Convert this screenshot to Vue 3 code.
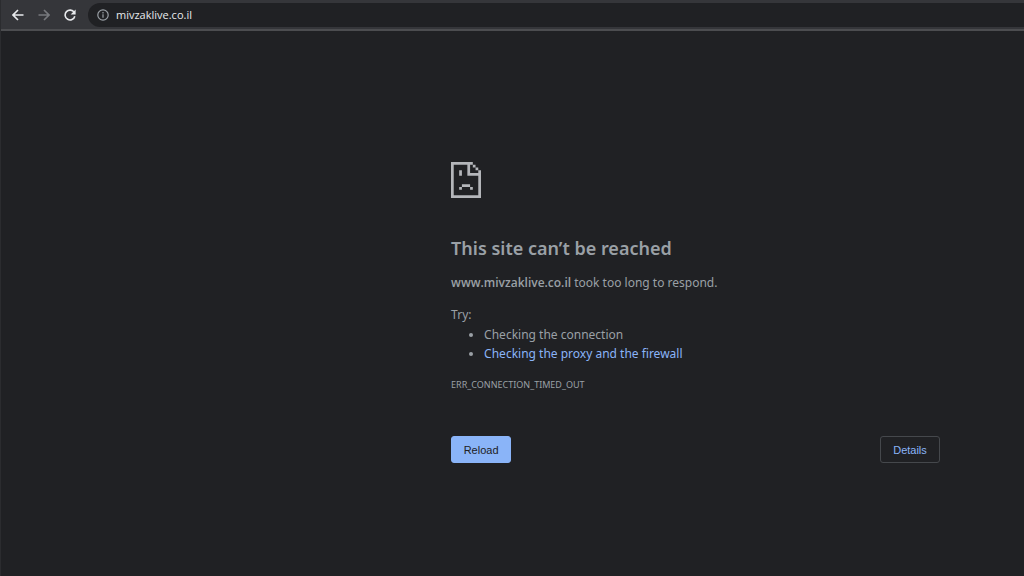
<script setup>
const host = 'mivzaklive.co.il'
const reload = () => window.location.reload()
</script>

<template>
  <div class="browser">
    <header class="toolbar">
      <button class="nav" type="button" aria-label="Back">
        <svg viewBox="0 0 12 12" width="12" height="12"><path d="M11.5 6H1.2M6 1L1 6l5 5" /></svg>
      </button>
      <button class="nav off" type="button" aria-label="Forward">
        <svg viewBox="0 0 12 12" width="12" height="12"><path d="M.5 6h10.3M6 1l5 5-5 5" /></svg>
      </button>
      <button class="nav" type="button" aria-label="Reload page" @click="reload">
        <svg viewBox="0 0 12 12" width="12" height="12">
          <path d="M10.2 3.4A4.9 4.9 0 1 0 10.8 7.2" />
          <path class="solid" d="M11.6 .4v5H6.6z" />
        </svg>
      </button>
      <div class="omnibox">
        <svg class="info" viewBox="0 0 12 12" width="12" height="12">
          <circle cx="6" cy="6" r="5.2" /><path d="M6 5.3v3.5M6 3v1.4" />
        </svg>
        <input class="url" type="text" aria-label="Address" :value="host" />
      </div>
    </header>

    <main class="error">
      <svg class="sad" viewBox="0 0 11 13" width="30" height="36" preserveAspectRatio="none" aria-hidden="true">
        <path d="M0 0H8V1H9V2H10V3H11V13H0ZM1 1V12H10V5H6V1ZM7 1V4H10V3H9V2H8V1Z" fill-rule="evenodd" />
        <path d="M3 3h1v2H3zM4 8h3v1H4zM3 9h1v1H3zM7 9h1v1H7z" />
      </svg>
      <h1>This site can’t be reached</h1>
      <p><strong>www.{{ host }}</strong> took too long to respond.</p>
      <div class="try">
        <p>Try:</p>
        <ul>
          <li>Checking the connection</li>
          <li><a href="#proxy">Checking the proxy and the firewall</a></li>
        </ul>
      </div>
      <p class="code">ERR_CONNECTION_TIMED_OUT</p>
      <div class="actions">
        <button class="primary" type="button" @click="reload">Reload</button>
        <button class="secondary" type="button">Details</button>
      </div>
    </main>
  </div>
</template>

<style>
body {
  background: #202124;
}
</style>

<style scoped>
.browser {
  min-height: 100vh;
  box-sizing: border-box;
  border-left: 1px solid #2b2c2f;
  background: #202124;
  color: #9aa0a6;
  font: 12px/20px "Noto Sans", sans-serif;
}
.toolbar {
  display: flex;
  align-items: center;
  height: 31px;
  box-sizing: border-box;
  padding-left: 4px;
  border-bottom: 2px solid #4c4d50;
  background: #35363a;
}
.nav {
  display: grid;
  place-items: center;
  width: 26px;
  height: 26px;
  padding: 0;
  border: 0;
  background: none;
  color: #e8eaed;
}
.nav svg {
  fill: none;
  stroke: currentColor;
  stroke-width: 1.6;
}
.nav.off {
  color: #77797d;
}
.nav .solid {
  fill: currentColor;
  stroke: none;
}
.omnibox {
  display: flex;
  flex: 1;
  align-items: center;
  gap: 7px;
  height: 24px;
  margin-left: 5px;
  padding-left: 9px;
  border-radius: 12px 0 0 12px;
  background: #202124;
}
.info {
  fill: none;
  stroke: #9aa0a6;
  stroke-width: 1.2;
}
.url {
  flex: 1;
  min-width: 0;
  padding: 0;
  border: 0;
  outline: 0;
  background: none;
  color: #e8eaed;
  font: 11px/20px "Open Sans", sans-serif;
}
.error {
  padding: 131px 84px 0 44%;
}
.sad {
  display: block;
  fill: #b4b6ba;
}
h1 {
  margin: 36px 0 11px;
  font: 600 18px/28px "Noto Sans", sans-serif;
}
p {
  margin: 0;
}
strong {
  font-family: "Open Sans", sans-serif;
  font-weight: 600;
}
.try {
  margin: 12px 0;
}
ul {
  margin: 0;
  padding-left: 33px;
  line-height: 19px;
}
a {
  color: #8ab4f8;
  text-decoration: none;
}
.code {
  font-size: 9px;
}
.actions {
  display: flex;
  justify-content: space-between;
  margin-top: 41px;
}
.actions button {
  min-width: 60px;
  height: 27px;
  padding: 0 11px;
  border: 1px solid #8ab4f8;
  border-radius: 3px;
  background: #8ab4f8;
  color: #202124;
  font: 11px "Liberation Sans", sans-serif;
}
.actions .secondary {
  border-color: #45484c;
  background: none;
  color: #8ab4f8;
}
</style>
